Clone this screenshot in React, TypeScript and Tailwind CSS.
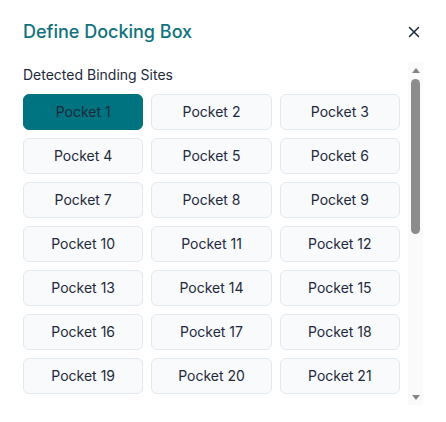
import { X } from "lucide-react";

const pockets = Array.from({ length: 21 }, (_, i) => i + 1);

function Scrollbar() {
  return (
    <div className="flex h-full w-[15px] shrink-0 flex-col items-center bg-[#fafafa]">
      <div className="flex h-[15px] items-center justify-center pt-[2px]">
        <div className="h-0 w-0 border-x-[4px] border-b-[5px] border-x-transparent border-b-[#858585]" />
      </div>
      <div className="mt-[2px] h-[155px] w-[9px] rounded-full bg-[#8c8c8c]" />
      <div className="flex-1" />
      <div className="flex h-[15px] items-center justify-center pb-[1px]">
        <div className="h-0 w-0 border-x-[4px] border-t-[5px] border-x-transparent border-t-[#858585]" />
      </div>
    </div>
  );
}

export default function App() {
  return (
    <div
      className="h-[422px] w-[446px] bg-white"
      style={{ fontFamily: "Inter, 'Noto Sans', sans-serif" }}
    >
      {/* Header */}
      <div className="flex items-center justify-between pl-[23px] pr-[23px] pt-[18px]">
        <h2 className="text-lg font-medium text-[#0f727c]">Define Docking Box</h2>
        <button className="text-[#1e293b]">
          <X size={18} strokeWidth={2} />
        </button>
      </div>

      {/* Scroll area */}
      <div className="ml-[23px] mt-4 flex h-[343px] w-[400px]">
        <div className="flex-1 overflow-y-auto pb-3 pr-2 pt-[3px] [scrollbar-width:none]">
          <p className="mb-[9px] text-sm text-[#1e293b]">Detected Binding Sites</p>
          <div className="grid grid-cols-3 gap-2">
            {pockets.map((n) => (
              <button
                key={n}
                className={
                  n === 1
                    ? "h-9 rounded-md border border-[#007380] bg-[#007380] text-sm text-[#1e293b]"
                    : "h-9 rounded-md border border-[#e2e8f0] bg-[#f8fafc] text-sm text-[#1e293b]"
                }
              >
                Pocket {n}
              </button>
            ))}
          </div>
        </div>
        <Scrollbar />
      </div>
    </div>
  );
}
